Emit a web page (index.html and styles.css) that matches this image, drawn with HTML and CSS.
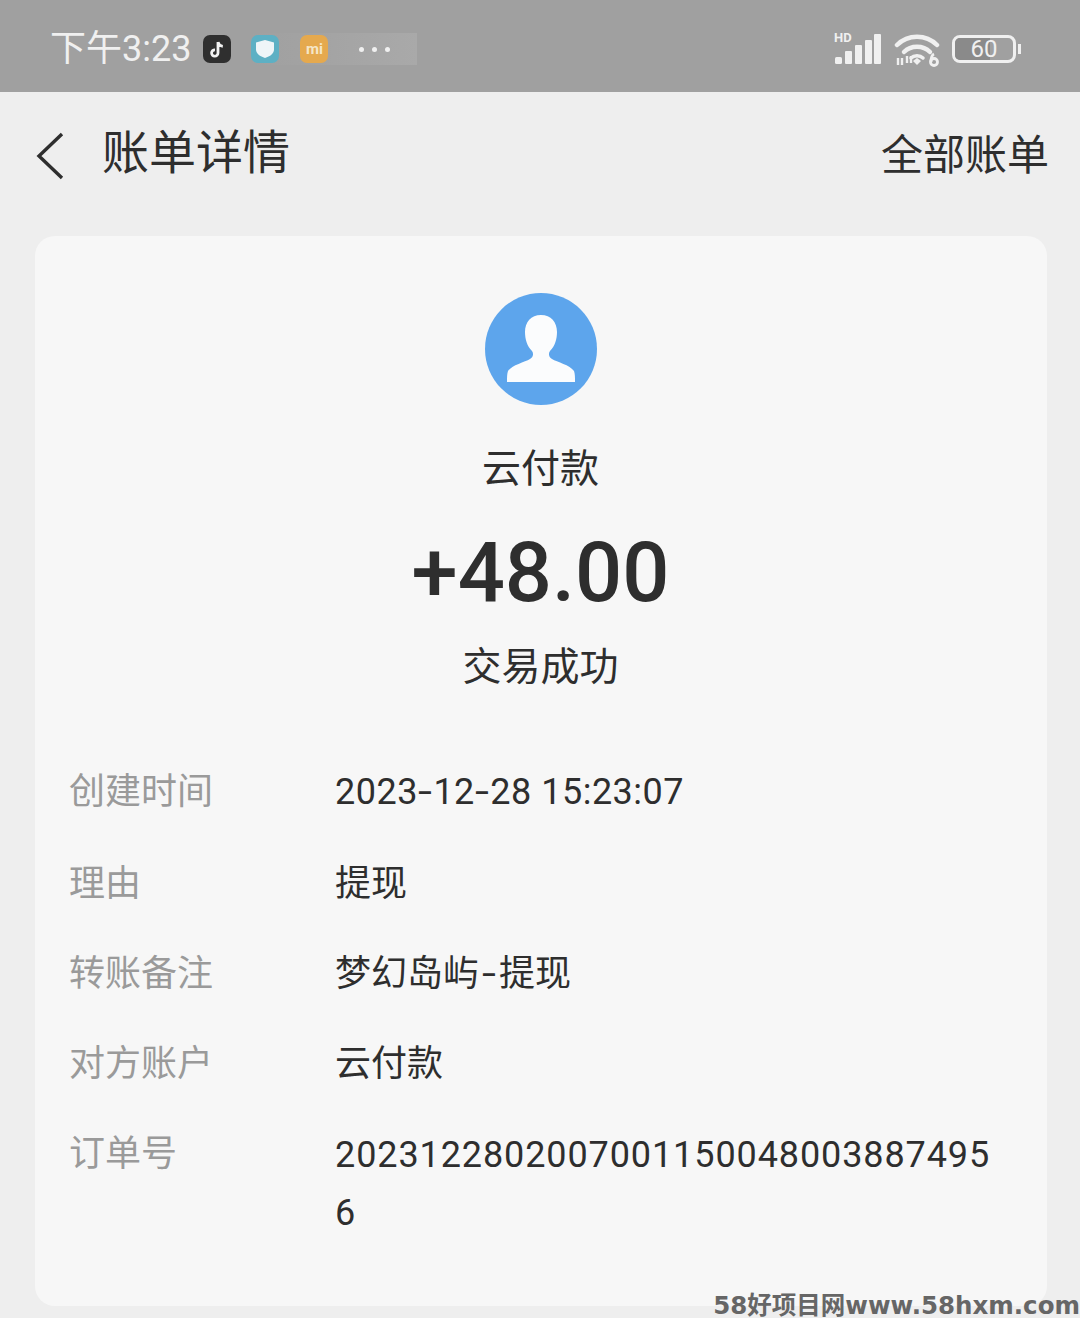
FILE: index.html
```html
<!DOCTYPE html>
<html lang="zh-CN">
<head>
    <meta charset="UTF-8">
    <meta name="viewport" content="width=device-width, initial-scale=1.0">
    <title>账单详情</title>
    <link rel="stylesheet" href="styles.css">
</head>
<body>
    <div id="statusbar">
        <div class="status-left">
            <span class="clock">下午3:23</span>
            <span class="app-icon tiktok">
                <svg viewBox="0 0 28 28" width="28" height="28"><path d="M15 7v11a3.2 3.2 0 1 1-3-3.2M15 7c.5 2.600 2.200 4 4.800 4.300" fill="none" stroke="#f2f2f2" stroke-width="2.800"/></svg>
            </span>
            <span class="notify-strip">
                <span class="app-icon shield">
                    <svg viewBox="0 0 28 28" width="28" height="28"><path d="M14 5l9 2.500v7c0 4-4 7-9 8.500-5-1.500-9-4.500-9-8.500v-7z" fill="#eef5f8"/></svg>
                </span>
                <span class="app-icon mi">mi</span>
                <span class="dots"><i></i><i></i><i></i></span>
            </span>
        </div>
        <div class="status-right">
            <span class="signal">
                <span class="hd">HD</span>
                <svg viewBox="0 0 48 32" width="48" height="32"><g fill="#f0f0f0"><rect x="1" y="24" width="7" height="7" rx="1.500"/><rect x="11" y="18" width="7" height="13" rx="1"/><rect x="21" y="12" width="7" height="19" rx="1"/><rect x="31" y="7" width="7" height="24" rx="1"/><rect x="40" y="1" width="7" height="30" rx="1"/></g></svg>
            </span>
            <svg class="wifi" viewBox="0 0 46 36" width="46" height="36">
                <g fill="none" stroke="#f0f0f0" stroke-width="4.500" stroke-linecap="round">
                    <path d="M3 14c11-11 29-11 40 0"/>
                    <path d="M10 21c7-7 19-7 26 0"/>
                </g>
                <path d="M17 27c3-3 9-3 12 0" fill="none" stroke="#f0f0f0" stroke-width="3.500" stroke-linecap="round"/>
                <path d="M19 30l4-3 4 3-4 4z" fill="#f0f0f0"/>
                <path d="M4 27v7M8 34v-7M13 25v7M17 32v-7" stroke="#f0f0f0" stroke-width="2.400" fill="none"/>
                <circle cx="40" cy="31" r="3.500" fill="none" stroke="#f0f0f0" stroke-width="2.800"/>
                <path d="M37 31c0-4 1-7 3-8" fill="none" stroke="#f0f0f0" stroke-width="2.800"/>
            </svg>
            <span class="battery">
                <span class="battery-body"><span class="battery-fill"></span><span class="battery-num">60</span></span>
                <span class="battery-tip"></span>
            </span>
        </div>
    </div>

    <div id="navbar">
        <div class="nav-left">
            <svg class="back" viewBox="0 0 30 48" width="30" height="48"><path d="M27 2L4 24 27 46" fill="none" stroke="#2e2e2e" stroke-width="3.400"/></svg>
            <span class="nav-title">账单详情</span>
        </div>
        <span class="nav-link">全部账单</span>
    </div>

    <div id="card">
        <div class="avatar">
            <svg viewBox="0 0 112 112" width="112" height="112">
                <circle cx="56" cy="56" r="56" fill="#5da5ec"/>
                <path d="M56 22c-10 0-16 7-16 17 0 7 2 14 7 19 2 3 1 6-2 8-5 3-18 6-22 12-1 3-1 6-1 11h68c0-5 0-8-1-11-4-6-17-9-22-12-3-2-4-5-2-8 5-5 7-12 7-19 0-10-6-17-16-17z" fill="#fbfcfd"/>
            </svg>
        </div>
        <div class="payer">云付款</div>
        <div class="amount">+48.00</div>
        <div class="state">交易成功</div>

        <div class="details">
            <div class="row row-time"><span class="key">创建时间</span><span class="val date">2023<span class="dash">-</span>12<span class="dash">-</span>28 15:23:07</span></div>
            <div class="row"><span class="key">理由</span><span class="val">提现</span></div>
            <div class="row"><span class="key">转账备注</span><span class="val">梦幻岛屿<span class="dash note-dash">-</span>提现</span></div>
            <div class="row"><span class="key">对方账户</span><span class="val">云付款</span></div>
            <div class="row"><span class="key">订单号</span><span class="val order">20231228020070011500480038874956</span></div>
        </div>
    </div>

    <div class="watermark">58好项目网www.58hxm.com</div>
</body>
</html>
```

FILE: styles.css
```css
html, body {
    margin: 0;
    padding: 0;
}

body {
    position: relative;
    width: 1080px;
    height: 1318px;
    overflow: hidden;
    background-color: #eeeeee;
    font-family: "Roboto", "Noto Sans CJK SC", sans-serif;
    color: #2e2e2e;
}

/* status bar */
#statusbar {
    height: 92px;
    box-sizing: border-box;
    padding: 6px 59px 0 50px;
    display: flex;
    justify-content: space-between;
    align-items: center;
    background-color: #a0a0a0;
    color: #f0f0f0;
}

.status-left {
    display: flex;
    align-items: center;
}

.clock {
    font-size: 36px;
    line-height: 44px;
    margin-right: 12px;
}

.app-icon {
    width: 28px;
    height: 28px;
    border-radius: 7px;
    display: flex;
    align-items: center;
    justify-content: center;
}

.tiktok {
    background-color: #2f2f2f;
}

.notify-strip {
    display: flex;
    align-items: center;
    height: 32px;
    margin-left: 20px;
    background: linear-gradient(to right, #a0a0a0, #a3a3a3 40%, #a9a9a9);
}

.shield {
    background-color: #5db0c4;
}

.mi {
    margin-left: 21px;
    background-color: #e5a94e;
    color: #f5e6c8;
    font-size: 15px;
    font-weight: 700;
    line-height: 28px;
}

.dots {
    display: flex;
    gap: 8px;
    padding: 0 27px 0 31px;
}

.dots i {
    width: 5px;
    height: 5px;
    border-radius: 50%;
    background-color: #f0f0f0;
}

.status-right {
    display: flex;
    align-items: center;
    gap: 12px;
}

.signal {
    position: relative;
    display: block;
    width: 48px;
    height: 32px;
}

.hd {
    position: absolute;
    left: 0;
    top: -2px;
    font-size: 13px;
    font-weight: 700;
    line-height: 14px;
}

.battery {
    display: flex;
    align-items: center;
    gap: 2px;
}

.battery-body {
    position: relative;
    width: 58px;
    height: 22px;
    border: 3px solid #f0f0f0;
    border-radius: 8px;
    overflow: hidden;
}

.battery-fill {
    display: block;
    width: 60%;
    height: 100%;
    background-color: #8a8a8a;
}

.battery-num {
    position: absolute;
    left: 0;
    right: 0;
    top: 0;
    text-align: center;
    font-size: 24px;
    line-height: 22px;
}

.battery-tip {
    width: 3px;
    height: 10px;
    background-color: #f0f0f0;
}

/* top nav */
#navbar {
    height: 124px;
    box-sizing: border-box;
    padding: 4px 31px 0 35px;
    display: flex;
    justify-content: space-between;
    align-items: center;
}

.nav-left {
    display: flex;
    align-items: center;
}

.nav-title {
    font-size: 47px;
    line-height: 60px;
    margin-left: 37px;
    margin-top: -6px;
}

.nav-link {
    font-size: 42px;
    line-height: 56px;
}

/* card */
#card {
    width: 1012px;
    height: 1070px;
    margin: 20px 0 0 35px;
    box-sizing: border-box;
    padding: 57px 1px 0 0;
    background-color: #f7f7f7;
    border-radius: 20px;
    text-align: center;
}

.avatar {
    height: 112px;
}

.avatar svg {
    display: block;
    margin: 0 auto;
}

.payer {
    margin-top: 40px;
    font-size: 39px;
    line-height: 48px;
}

.amount {
    margin-top: 32px;
    font-size: 83px;
    font-weight: 500;
    line-height: 96px;
}

.state {
    margin-top: 22px;
    font-size: 39px;
    line-height: 48px;
}

.details {
    margin-top: 77px;
    padding-left: 34px;
    text-align: left;
    font-size: 36px;
}

.row {
    display: flex;
    margin-top: 42px;
    line-height: 48px;
}

.row-time {
    margin-top: 0;
    margin-bottom: 44px;
}

.key {
    width: 266px;
    flex-shrink: 0;
    color: #9a9a9a;
}

.val {
    width: 660px;
}

.date {
    letter-spacing: 0.5px;
}

/* the phone font has a longer hyphen */
.dash {
    display: inline-block;
    margin: 0 2.5px;
    transform: scaleX(1.4);
}

.note-dash {
    margin: 0 5px;
}

.order {
    letter-spacing: 0.9px;
    line-height: 58px;
    margin-top: -4px;
    word-break: break-all;
}

.watermark {
    position: absolute;
    right: 0;
    bottom: -4px;
    font-family: "DejaVu Sans", "Noto Sans CJK SC", sans-serif;
    font-size: 24.5px;
    font-weight: 700;
    line-height: 32px;
    color: #666;
}
```
